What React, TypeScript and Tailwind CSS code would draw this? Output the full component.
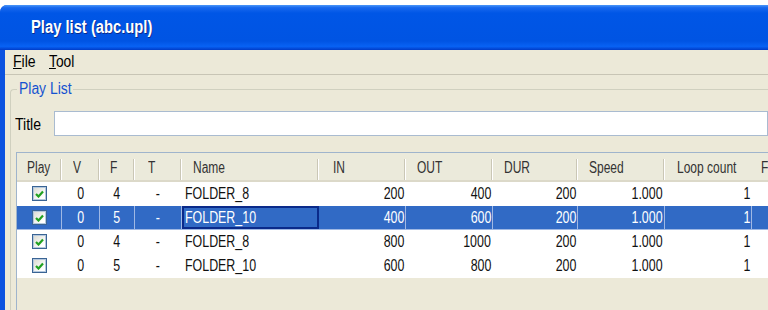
const cols = [
  { key: "play", label: "Play", w: "w-[45px]", pad: "pl-[10px]" },
  { key: "v", label: "V", w: "w-[38px]", pad: "pl-[11px]" },
  { key: "f", label: "F", w: "w-[35px]", pad: "pl-[10px]" },
  { key: "t", label: "T", w: "w-[47px]", pad: "pl-[13px]" },
  { key: "name", label: "Name", w: "w-[137px]", pad: "pl-[11px]" },
  { key: "in", label: "IN", w: "w-[87px]", pad: "pl-[14px]" },
  { key: "out", label: "OUT", w: "w-[87px]", pad: "pl-[11px]" },
  { key: "dur", label: "DUR", w: "w-[85px]", pad: "pl-[11px]" },
  { key: "speed", label: "Speed", w: "w-[87px]", pad: "pl-[11px]" },
  { key: "loop", label: "Loop count", w: "w-[87px]", pad: "pl-[12px]" },
  { key: "rest", label: "F", w: "w-[100px]", pad: "pl-[9px]" },
];

const rows = [
  { v: "0", f: "4", name: "FOLDER_8", in: "200", out: "400", dur: "200", speed: "1.000", loop: "1" },
  { v: "0", f: "5", name: "FOLDER_10", in: "400", out: "600", dur: "200", speed: "1.000", loop: "1", selected: true },
  { v: "0", f: "4", name: "FOLDER_8", in: "800", out: "1000", dur: "200", speed: "1.000", loop: "1" },
  { v: "0", f: "5", name: "FOLDER_10", in: "600", out: "800", dur: "200", speed: "1.000", loop: "1" },
];

// the old UI font is narrow, so text is squeezed a little
function Txt({ children, origin = "origin-left", className = "scale-x-[0.73]" }: { children: React.ReactNode; origin?: string; className?: string }) {
  return <span className={`inline-block whitespace-nowrap ${origin} ${className}`}>{children}</span>;
}

function CheckBox() {
  return (
    <span className="flex h-[15px] w-[15px] items-center justify-center border border-[#3a6494] bg-[linear-gradient(135deg,#d8d8ce,#ffffff_75%)] shadow-[inset_0_0_0_1px_#b4c8de]">
      <svg width="9" height="8" viewBox="0 0 9 8">
        <path d="M1 4 L3.5 6.5 L8 1.5" fill="none" stroke="#21a121" strokeWidth="2.2" />
      </svg>
    </span>
  );
}

function Cell({
  className,
  children,
  selected,
  focus,
}: {
  className: string;
  children?: React.ReactNode;
  selected?: boolean;
  focus?: boolean;
}) {
  const border = focus
    ? "border-2 border-[#0a2a8a]"
    : selected
      ? "border-r border-[#9fb8e4]"
      : "border-r border-white";
  return <div className={`flex h-full shrink-0 items-center ${border} ${className}`}>{children}</div>;
}

export default function App() {
  return (
    <div className="h-[310px] w-[768px] overflow-hidden bg-white pt-[5px] font-['Liberation_Sans',sans-serif] text-black">
      <div className="flex h-[305px] flex-col rounded-tl-[7px] bg-[#0b52e0]">
        {/* title bar */}
        <div className="flex h-[45px] shrink-0 items-center rounded-tl-[7px] bg-[linear-gradient(to_bottom,#4a97f8_0%,#1868ee_6%,#0056e6_18%,#0054e3_80%,#0862f4_92%,#003cc8_100%)] pl-[31px]">
          <Txt className="scale-x-[0.82] text-[18px] font-bold text-white [text-shadow:1px_1px_0_#0a2a8a]">
            Play list (abc.upl)
          </Txt>
        </div>

        <div className="ml-[5px] flex flex-1 flex-col bg-[#ece9d8]">
          {/* menu */}
          <div className="flex h-[25px] shrink-0 items-center gap-[10px] border-b border-[#c8c5b5] pl-[8px] text-[16px]">
            <Txt className="scale-x-[0.88]">
              <span className="underline">F</span>ile
            </Txt>
            <Txt className="scale-x-[0.86]">
              <span className="underline">T</span>ool
            </Txt>
          </div>

          {/* group box */}
          <div className="relative ml-[5px] mt-[14px] flex flex-1 flex-col rounded-tl-[4px] border-l border-t border-[#d0d0bf]">
            <span className="absolute left-[6px] top-[-10px] w-[56px] bg-[#ece9d8] px-[2px] text-[16px] leading-[18px] text-[#1552d0]">
              <Txt className="scale-x-[0.87]">Play List</Txt>
            </span>

            <div className="mt-[21px] flex h-[25px] items-center">
              <span className="w-[43px] pl-[4px] pt-[2px] text-[16px]">
                <Txt className="scale-x-[0.88]">Title</Txt>
              </span>
              <div className="h-full flex-1 border border-[#a9bbd0] bg-white" />
            </div>

            <div className="ml-[5px] mt-[16px] flex flex-1 flex-col border-l border-t border-[#9fb4cc] text-[17px]">
              {/* header */}
              <div className="flex h-[29px] shrink-0 border-b-2 border-[#dcd9c9] bg-[#ebeadb] text-[16px] text-[#333]">
                {cols.map((c) => (
                  <div key={c.key} className={`flex h-full shrink-0 items-center justify-between overflow-hidden ${c.w}`}>
                    <span className={`${c.pad} pt-[2px]`}>
                      <Txt className="scale-x-[0.75]">{c.label}</Txt>
                    </span>
                    <span className="h-[21px] w-[2px] shrink-0 self-end border-l border-r border-l-[#cac7b6] border-r-white" />
                  </div>
                ))}
              </div>

              {/* rows */}
              {rows.map((r, i) => {
                const sel = !!r.selected;
                return (
                  <div
                    key={i}
                    className={`flex h-[24px] shrink-0 border-b ${
                      sel ? "border-[#9fb8e4] bg-[#316ac5] text-white" : "border-white bg-white text-[#111]"
                    }`}
                  >
                    <Cell selected={sel} className="w-[45px] justify-center">
                      <CheckBox />
                    </Cell>
                    <Cell selected={sel} className="w-[38px] justify-center">
                      <Txt origin="origin-center">{r.v}</Txt>
                    </Cell>
                    <Cell selected={sel} className="w-[35px] justify-center">
                      <Txt origin="origin-center">{r.f}</Txt>
                    </Cell>
                    <Cell selected={sel} className="w-[47px] justify-center">
                      <Txt origin="origin-center">-</Txt>
                    </Cell>
                    <Cell selected={sel} focus={sel} className={`w-[137px] ${sel ? "pl-[1px]" : "pl-[3px]"}`}>
                      <Txt>{r.name}</Txt>
                    </Cell>
                    <Cell selected={sel} className="w-[87px] justify-end pr-[1px]">
                      <Txt origin="origin-right">{r.in}</Txt>
                    </Cell>
                    <Cell selected={sel} className="w-[87px] justify-end pr-[1px]">
                      <Txt origin="origin-right">{r.out}</Txt>
                    </Cell>
                    <Cell selected={sel} className="w-[85px] justify-end pr-[1px]">
                      <Txt origin="origin-right">{r.dur}</Txt>
                    </Cell>
                    <Cell selected={sel} className="w-[87px] justify-end pr-[1px]">
                      <Txt origin="origin-right">{r.speed}</Txt>
                    </Cell>
                    <Cell selected={sel} className="w-[87px] justify-end pr-[1px]">
                      <Txt origin="origin-right">{r.loop}</Txt>
                    </Cell>
                    <div className="flex-1" />
                  </div>
                );
              })}
            </div>
          </div>
        </div>
      </div>
    </div>
  );
}
